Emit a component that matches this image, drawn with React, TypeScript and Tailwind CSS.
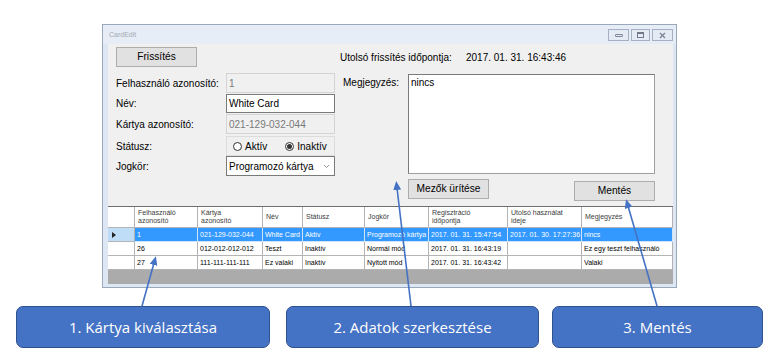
import React from 'react';

const cols = [63, 65, 40, 62, 64, 79, 74, 91];

const headers: string[][] = [
  ['Felhasználó', 'azonosító'],
  ['Kártya', 'azonosító'],
  ['Név'],
  ['Státusz'],
  ['Jogkör'],
  ['Regisztráció', 'időpontja'],
  ['Utolsó használat', 'ideje'],
  ['Megjegyzés'],
];

const rows: string[][] = [
  ['1', '021-129-032-044', 'White Card', 'Aktív', 'Programozó kártya', '2017. 01. 31. 15:47:54', '2017. 01. 30. 17:27:36', 'nincs'],
  ['26', '012-012-012-012', 'Teszt', 'Inaktív', 'Normál mód', '2017. 01. 31. 16:43:19', '', 'Ez egy teszt felhasználó'],
  ['27', '111-111-111-111', 'Ez valaki', 'Inaktív', 'Nyitott mód', '2017. 01. 31. 16:43:42', '', 'Valaki'],
];

function WinButton({ children, className = '' }: { children: React.ReactNode; className?: string }) {
  return (
    <button
      className={`h-[20px] w-[81px] border border-[#adadad] bg-[#e1e1e1] text-[10.2px] text-black flex items-center justify-center ${className}`}
    >
      {children}
    </button>
  );
}

function FormRow({ label, children, className = '' }: { label: string; children: React.ReactNode; className?: string }) {
  return (
    <div className={`flex h-[20px] items-center ${className}`}>
      <div className="w-[110px] text-[10px] text-black">{label}</div>
      {children}
    </div>
  );
}

function Radio({ checked, label }: { checked?: boolean; label: string }) {
  return (
    <div className="flex items-center gap-[3px]">
      <span className="flex h-[9px] w-[9px] items-center justify-center rounded-full border border-[#333] bg-white">
        {checked && <span className="h-[5px] w-[5px] rounded-full bg-[#333]" />}
      </span>
      <span>{label}</span>
    </div>
  );
}

function CardWindow() {
  return (
    <div className="flex h-[264px] w-[575px] flex-col border border-[#9aa8bb] bg-[#dde7f3]">
      {/* title bar */}
      <div className="flex h-[19px] items-start justify-between bg-[#e6edf6]">
        <span className="pl-[6px] pt-[6px] text-[7px] leading-none text-[#a3a9b2]">CardEdit</span>
        <div className="mr-[3px] mt-[4px] flex gap-[2px]">
          <div className="flex h-[12px] w-[21px] items-center justify-center border border-[#a5b1c2] bg-[#e4ebf5]">
            <span className="h-[3px] w-[8px] rounded-[1px] border border-[#7c8696]" />
          </div>
          <div className="flex h-[12px] w-[19px] items-center justify-center border border-[#a5b1c2] bg-[#e4ebf5]">
            <span className="h-[6px] w-[7px] border border-[#6f7988] border-t-2" />
          </div>
          <div className="flex h-[12px] w-[21px] items-center justify-center border border-[#a5b1c2] bg-[#e4ebf5]">
            <svg width="7" height="7" viewBox="0 0 7 7">
              <path d="M1 1 L6 6 M6 1 L1 6" stroke="#7c8696" strokeWidth="1.4" />
            </svg>
          </div>
        </div>
      </div>

      {/* client area */}
      <div className="ml-[5px] mr-[3px] flex h-[240px] flex-col bg-[#f0f0f0]">
        <div className="flex h-[162px]">
          {/* left column */}
          <div className="flex w-[227px] flex-col pl-[8px]">
            <WinButton className="mt-[3px]">Frissítés</WinButton>
            <FormRow label="Felhasználó azonosító:" className="mt-[6px]">
              <div className="flex h-[20px] w-[109px] items-center border border-[#d4d4d4] bg-[#f0f0f0] pl-[2px] text-[10px] text-[#7a7a7a]">1</div>
            </FormRow>
            <FormRow label="Név:">
              <div className="flex h-[19px] w-[109px] items-center border border-[#7a7a7a] bg-white pl-[2px] text-[10px] text-black">White Card</div>
            </FormRow>
            <FormRow label="Kártya azonosító:" className="mt-[1px]">
              <div className="flex h-[20px] w-[109px] items-center border border-[#d4d4d4] bg-[#f0f0f0] pl-[2px] text-[10px] text-[#7a7a7a]">021-129-032-044</div>
            </FormRow>
            <FormRow label="Státusz:" className="mt-[2px]">
              <div className="flex h-[20px] w-[109px] items-center gap-[18px] border border-[#dcdcdc] pl-[6px] text-[10px] text-black">
                <Radio label="Aktív" />
                <Radio checked label="Inaktív" />
              </div>
            </FormRow>
            <FormRow label="Jogkör:">
              <div className="flex h-[20px] w-[109px] items-center justify-between border border-[#7a7a7a] bg-white pl-[2px] pr-[4px] text-[10px] text-black">
                <span>Programozó kártya</span>
                <svg width="7" height="5" viewBox="0 0 7 5">
                  <path d="M1 1 L3.5 3.5 L6 1" stroke="#888" strokeWidth="0.9" fill="none" />
                </svg>
              </div>
            </FormRow>
          </div>

          {/* right column */}
          <div className="ml-[5px] flex flex-col">
            <div className="mt-[6px] flex h-[14px] items-center text-[10px] text-black">
              <span className="w-[126px]">Utolsó frissítés időpontja:</span>
              <span>2017. 01. 31. 16:43:46</span>
            </div>
            <div className="mt-[10px] flex">
              <span className="ml-[3px] mt-[2px] w-[65px] text-[10px] leading-[14px] text-black">Megjegyzés:</span>
              <div className="h-[100px] w-[247px] border border-[#a0a0a0] border-l-[#7a7a7a] border-t-[#7a7a7a] bg-white pl-[2px] pt-[1px] text-[10px] leading-[13px] text-black">
                nincs
              </div>
            </div>
            <div className="flex pl-[68px]">
              <WinButton className="mt-[5px]">Mezők ürítése</WinButton>
              <WinButton className="ml-[85px] mt-[7px]">Mentés</WinButton>
            </div>
          </div>
        </div>

        {/* data grid */}
        <div className="flex h-[78px] flex-col border-t border-[#6e6e6e] bg-[#ababab] text-[7px] leading-[8px]">
          <div className="flex h-[21px] bg-white text-[#3c3c3c]">
            <div className="w-[27px] border-b border-r border-[#b4b4b4]" />
            {headers.map((h, i) => (
              <div
                key={i}
                style={{ width: cols[i] }}
                className="flex flex-col justify-center border-b border-r border-[#b4b4b4] pl-[3px]"
              >
                {h.map((line) => (
                  <span key={line} className="whitespace-nowrap">{line}</span>
                ))}
              </div>
            ))}
          </div>
          {rows.map((r, ri) => {
            const sel = ri === 0;
            return (
              <div key={ri} className={`flex h-[14px] ${sel ? 'bg-[#3399ff] text-white' : 'bg-white text-black'}`}>
                <div className={`flex w-[27px] items-center border-b border-r border-[#b4b4b4] pl-[4px] ${sel ? 'bg-[#bfddf6]' : 'bg-white'}`}>
                  {sel && (
                    <svg width="4" height="6" viewBox="0 0 4 6">
                      <path d="M0 0 L4 3 L0 6 Z" fill="#222" />
                    </svg>
                  )}
                </div>
                {r.map((c, ci) => (
                  <div
                    key={ci}
                    style={{ width: cols[ci] }}
                    className={`flex items-center overflow-hidden whitespace-nowrap border-b border-r pl-[2px] ${sel ? 'border-[#cfe4f8]' : 'border-[#b4b4b4]'}`}
                  >
                    {c}
                  </div>
                ))}
              </div>
            );
          })}
        </div>
      </div>
    </div>
  );
}

function Callout({ text, width }: { text: string; width: number }) {
  return (
    <div
      style={{ width }}
      className="flex h-[42px] items-center justify-center rounded-[7px] border border-[#2f528f] bg-[#4472c4] font-['Open_Sans',sans-serif] text-[15px] text-white"
    >
      {text}
    </div>
  );
}

export default function App() {
  return (
    <div className="relative h-[357px] w-[780px] overflow-hidden bg-white font-['Liberation_Sans',Arial,sans-serif]">
      <div className="pl-[102px] pt-[24px]">
        <CardWindow />
      </div>
      <div className="mt-[18px] flex pl-[16px]">
        <Callout text="1. Kártya kiválasztása" width={254} />
        <div className="ml-[16px]">
          <Callout text="2. Adatok szerkesztése" width={253} />
        </div>
        <div className="ml-[13px]">
          <Callout text="3. Mentés" width={211} />
        </div>
      </div>

      {/* pointer arrows */}
      <svg className="pointer-events-none absolute left-0 top-0" width="780" height="357" viewBox="0 0 780 357">
        <defs>
          <marker id="ah" markerWidth="9" markerHeight="8" refX="2" refY="4" orient="auto" markerUnits="userSpaceOnUse">
            <path d="M0 0 L9 4 L0 8 Z" fill="#4472c4" />
          </marker>
        </defs>
        <line x1="142" y1="306" x2="154" y2="263" stroke="#4472c4" strokeWidth="1.6" markerEnd="url(#ah)" />
        <line x1="411" y1="306" x2="397" y2="188" stroke="#4472c4" strokeWidth="1.6" markerEnd="url(#ah)" />
        <line x1="657" y1="306" x2="628" y2="206" stroke="#4472c4" strokeWidth="1.6" markerEnd="url(#ah)" />
      </svg>
    </div>
  );
}
